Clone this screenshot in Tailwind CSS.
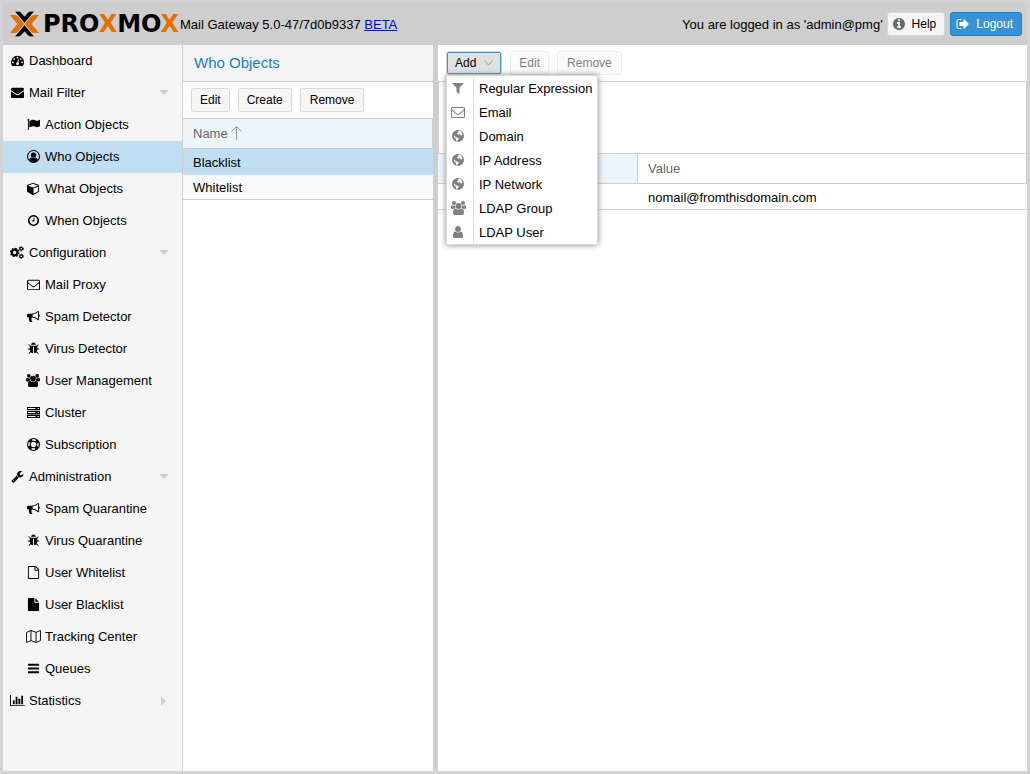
<!DOCTYPE html>
<html lang="en">
<head>
<meta charset="utf-8">
<meta name="viewport" content="width=device-width, initial-scale=1">
<title>Proxmox Mail Gateway</title>
<script src="https://cdn.jsdelivr.net/npm/@tailwindcss/browser@4"></script>
</head>
<body class="flex h-screen flex-col border-3 border-[#d4d4d4] bg-white font-['Liberation_Sans',sans-serif] text-[13px] leading-4 text-black">

<svg class="hidden" aria-hidden="true">
  <symbol id="tachometer" viewBox="0 0 1792 1792"><path d="M384 1152q0-53-37.500-90.500t-90.500-37.500-90.500 37.500-37.500 90.500 37.500 90.500 90.500 37.500 90.500-37.500 37.500-90.500zm192-448q0-53-37.500-90.500t-90.500-37.500-90.500 37.500-37.500 90.500 37.500 90.500 90.500 37.500 90.500-37.500 37.500-90.500zm428 481l101-382q6-26-7.500-48.500t-38.500-29.500-48 6.500-30 39.500l-101 382q-60 5-107 43.500t-63 98.500q-20 77 20 146t117 89 146-20 89-117q16-60-6-117t-72-91zm660-33q0-53-37.500-90.500t-90.500-37.500-90.500 37.500-37.500 90.500 37.500 90.500 90.500 37.500 90.500-37.500 37.500-90.500zm-640-640q0-53-37.500-90.500t-90.500-37.500-90.500 37.500-37.500 90.500 37.500 90.500 90.500 37.500 90.500-37.500 37.500-90.500zm448 192q0-53-37.500-90.500t-90.500-37.500-90.500 37.500-37.500 90.500 37.500 90.500 90.500 37.500 90.500-37.500 37.500-90.500zm320 448q0 261-141 483-19 29-54 29h-1402q-35 0-54-29-141-221-141-483 0-182 71-348t191-286 286-191 348-71 348 71 286 191 191 286 71 348z"/></symbol>
  <symbol id="envelope" viewBox="0 0 1792 1792"><path d="M1792 710v794q0 66-47 113t-113 47h-1472q-66 0-113-47t-47-113v-794q44 49 101 87 362 246 497 345 57 42 92.500 65.500t94.500 48 110 24.500h2q51 0 110-24.500t94.500-48 92.500-65.500q170-123 498-345 57-39 100-87zm0-294q0 79-49 151t-122 123q-376 261-468 325-10 7-42.500 30.500t-54 38-52 32.500-57.500 27-50 9h-2q-23 0-50-9t-57.500-27-52-32.500-54-38-42.500-30.500q-91-64-262-182.500t-205-142.500q-62-42-117-115.500t-55-136.500q0-78 41.500-130t118.500-52h1472q65 0 112.500 47t47.500 113z"/></symbol>
  <symbol id="envelope-o" viewBox="0 0 1792 1792"><path d="M1664 1504v-768q-32 36-69 66-268 206-426 338-51 43-83 67t-86.500 48.500-102.500 24.500h-2q-48 0-102.500-24.500t-86.500-48.500-83-67q-158-132-426-338-37-30-69-66v768q0 13 9.500 22.500t22.500 9.500h1472q13 0 22.500-9.500t9.500-22.500zm0-1051v-24.500l-.5-13-3-12.500-5.500-9-9-7.500-14-2.500h-1472q-13 0-22.500 9.500t-9.500 22.500q0 168 147 284 193 152 401 317 6 5 35 29.500t46 37.500 44.500 31.500 50.500 27.500 43 9h2q20 0 43-9t50.500-27.500 44.500-31.500 46-37.500 35-29.500q208-165 401-317 54-43 100.500-115.500t46.500-131.500zm128-37v1088q0 66-47 113t-113 47h-1472q-66 0-113-47t-47-113v-1088q0-66 47-113t113-47h1472q66 0 113 47t47 113z"/></symbol>
  <symbol id="flag" viewBox="0 0 1792 1792"><path d="M320 256q0 72-64 110v1266q0 13-9.500 22.500t-22.500 9.500h-64q-13 0-22.500-9.500t-9.500-22.500v-1266q-64-38-64-110 0-53 37.500-90.500t90.500-37.500 90.500 37.500 37.500 90.500zm1472 64v763q0 25-12.500 38.500t-39.500 27.500q-215 116-369 116-61 0-123.500-22t-108.500-48-115.500-48-142.500-22q-192 0-464 146-17 9-33 9-26 0-45-19t-19-45v-742q0-32 31-55 21-14 79-43 236-120 421-120 107 0 200 29t219 88q38 19 88 19 54 0 117.500-21t110-47 88-47 54.500-21q26 0 45 19t19 45z"/></symbol>
  <symbol id="user-circle-o" viewBox="0 0 1792 1792"><path fill-rule="evenodd" d="M896 0a896 896 0 1 1 0 1792a896 896 0 1 1 0-1792zM896 150a746 746 0 0 0-580 1210c45-220 160-320 314-320q110 102 266 102t266-102c170 0 269 100 314 320a746 746 0 0 0-580-1210z"/><circle cx="896" cy="700" r="370"/></symbol>
  <symbol id="cube" viewBox="0 0 1792 1792"><path d="M896 1629l640-349v-636l-640 233v752zm-64-865l698-254-698-254-698 254zm832-252v768q0 35-18 65t-49 47l-704 384q-28 16-61 16t-61-16l-704-384q-31-17-49-47t-18-65v-768q0-40 23-73t61-47l704-256q22-8 44-8t44 8l704 256q38 14 61 47t23 73z"/></symbol>
  <symbol id="clock-o" viewBox="0 0 1792 1792"><path d="M1024 544v448q0 14-9 23t-23 9h-320q-14 0-23-9t-9-23v-64q0-14 9-23t23-9h224v-352q0-14 9-23t23-9h64q14 0 23 9t9 23zm416 352q0-148-73-273t-198-198-273-73-273 73-198 198-73 273 73 273 198 198 273 73 273-73 198-198 73-273zm224 0q0 209-103 385.500t-279.500 279.500-385.500 103-385.500-103-279.500-279.500-103-385.500 103-385.500 279.500-279.500 385.500-103 385.500 103 279.500 279.500 103 385.500z"/></symbol>
  <symbol id="cogs" viewBox="0 0 1920 1792"><g fill="none" stroke="currentColor"><circle cx="640" cy="896" r="385" stroke-width="300"/><circle cx="640" cy="896" r="570" stroke-width="170" stroke-dasharray="223.800"/><circle cx="1536" cy="384" r="200" stroke-width="170"/><circle cx="1536" cy="384" r="310" stroke-width="120" stroke-dasharray="162.300"/><circle cx="1536" cy="1408" r="200" stroke-width="170"/><circle cx="1536" cy="1408" r="310" stroke-width="120" stroke-dasharray="162.300"/></g></symbol>
  <symbol id="bullhorn" viewBox="0 0 1792 1792"><path d="M1664 640q53 0 90.500 37.500t37.500 90.500-37.500 90.500-90.500 37.500v384q0 52-38 90t-90 38q-417-347-812-380-58 19-91 66t-31 100.500 40 92.500q-20 33-23 65.500t6 58 33.500 55 48 50 61.500 50.500q-29 58-111.500 83t-168.500 11.500-132-55.500q-7-23-29.500-87.500t-32-94.500-23-89-15-101 3.500-98.500 22-110.500h-122q-66 0-113-47t-47-113v-192q0-66 47-113t113-47h480q435 0 896-384 52 0 90 38t38 90v384zm-128 604v-954q-394 302-768 343v270q377 42 768 341z"/></symbol>
  <symbol id="bug" viewBox="0 0 1792 1792"><path d="M1696 960q0 26-19 45t-45 19h-224q0 171-67 290l208 209q19 19 19 45t-19 45q-18 19-45 19t-45-19l-198-197q-5 5-15 13t-42 28.500-65 36.500-82 29-97 13v-896h-128v896q-51 0-101.500-13.500t-87-33-66-39-43.500-32.500l-15-14-183 207q-20 21-48 21-24 0-43-16-19-18-20.500-44.500t15.500-46.500l202-227q-58-114-58-274h-224q-26 0-45-19t-19-45 19-45 45-19h224v-294l-173-173q-19-19-19-45t19-45 45-19 45 19l173 173h844l173-173q19-19 45-19t45 19 19 45-19 45l-173 173v294h224q26 0 45 19t19 45zm-480-576h-640q0-133 93.500-226.500t226.500-93.500 226.500 93.500 93.500 226.500z"/></symbol>
  <symbol id="users" viewBox="0 0 1920 1792"><circle cx="384" cy="256" r="256"/><circle cx="1536" cy="256" r="256"/><circle cx="960" cy="640" r="384"/><path d="M593 896q-162 5-265 128H194q-82 0-138-40.500T0 865q0-353 124-353 6 0 43.500 21t97.500 42.500T384 597q67 0 133-23-5 37-5 66 0 139 81 256zM1327 896q162 5 265 128h134q82 0 138-40.500t56-118.500q0-353-124-353-6 0-43.500 21t-97.500 42.500-119 21.500q-67 0-133-23 5 37 5 66 0 139-81 256zM1664 1533q0 120-73 189.500t-194 69.500H523q-121 0-194-69.500T256 1533q0-53 3.500-103.500t14-109T300 1212t43-97.500 62-81 85.500-53.500T602 960q10 0 43 21.500t73 48 107 48T960 1099t135-21.500 107-48 73-48 43-21.500q61 0 111.500 20t85.500 53.500 62 81 43 97.500 26.500 108.500 14 109 3.500 103.500z"/></symbol>
  <symbol id="server" viewBox="0 0 1792 1792"><path fill-rule="evenodd" d="M0 128h1792v448H0zM128 290v124h1024V290zM0 672h1792v448H0zM128 834v124h1024V834zM0 1216h1792v448H0zM128 1378v124h1024v-124zM1470 290h170v124h-170zM1470 834h170v124h-170zM1470 1378h170v124h-170z"/></symbol>
  <symbol id="life-ring" viewBox="0 0 1792 1792"><g fill="none" stroke="currentColor"><circle cx="896" cy="896" r="822" stroke-width="148"/><circle cx="896" cy="896" r="448" stroke-width="148"/><circle cx="896" cy="896" r="640" stroke-width="400" stroke-dasharray="480 525.300" stroke-dashoffset="-262"/></g></symbol>
  <symbol id="wrench" viewBox="0 0 1792 1792"><path d="M448 1472q0-26-19-45t-45-19-45 19-19 45 19 45 45 19 45-19 19-45zm644-420l-682 682q-37 37-90 37-52 0-91-37l-106-108q-38-36-38-90 0-53 38-91l681-681q39 98 114.500 173.500t173.500 114.500zm634-435q0 39-23 106-47 134-164.500 217.500t-258.500 83.500q-185 0-316.500-131.500t-131.500-316.500 131.500-316.500 316.500-131.500q58 0 121.500 16.500t107.500 46.500q16 11 16 28t-16 28l-293 169v224l193 107q5-3 79-48.500t135.500-81 70.500-35.500q15 0 23.500 10t8.500 25z"/></symbol>
  <symbol id="file-o" viewBox="0 0 1792 1792"><path d="M1596 380q28 28 48 76t20 88v1152q0 40-28 68t-68 28h-1344q-40 0-68-28t-28-68v-1600q0-40 28-68t68-28h896q40 0 88 20t76 48zm-444-244v376h376q-10-29-22-41l-313-313q-12-12-41-22zm384 1528v-1024h-416q-40 0-68-28t-28-68v-416h-768v1536h1280z"/></symbol>
  <symbol id="file" viewBox="0 0 1792 1792"><path d="M1152 512v-472q22 14 36 28l408 408q14 14 28 36h-472zm-128 32q0 40 28 68t68 28h544v1056q0 40-28 68t-68 28h-1344q-40 0-68-28t-28-68v-1600q0-40 28-68t68-28h800v544z"/></symbol>
  <symbol id="map-o" viewBox="0 0 2048 1792"><path fill="none" stroke="currentColor" stroke-width="128" stroke-linejoin="round" d="M64 330L672 70l704 256 608-256v1392l-608 256-704-256-608 256zM672 70v1392M1376 326v1392"/></symbol>
  <symbol id="bars" viewBox="0 0 1792 1792"><path d="M192 256h1408q64 0 64 64v128q0 64-64 64H192q-64 0-64-64V320q0-64 64-64zM192 768h1408q64 0 64 64v128q0 64-64 64H192q-64 0-64-64V832q0-64 64-64zM192 1280h1408q64 0 64 64v128q0 64-64 64H192q-64 0-64-64v-128q0-64 64-64z"/></symbol>
  <symbol id="bar-chart" viewBox="0 0 2048 1792"><path d="M640 896v512h-256v-512h256zm384-512v1024h-256v-1024h256zm1024 1152v128h-2048v-1536h128v1408h1920zm-640-896v768h-256v-768h256zm384-384v1152h-256v-1152h256z"/></symbol>
  <symbol id="filter" viewBox="0 0 1792 1792"><path d="M1595 295q17 41-14 70l-493 493v742q0 42-39 59-13 5-25 5-27 0-45-19l-256-256q-19-19-19-45v-486l-493-493q-31-29-14-70 17-39 59-39h1280q42 0 59 39z"/></symbol>
  <symbol id="globe" viewBox="0 0 1792 1792"><path fill-rule="evenodd" d="M896 128a768 768 0 1 1 0 1536a768 768 0 1 1 0-1536zM1010 250l-110 60 60 90-150 110-60 120 110 40 60 100 110-90 60 60 80-30 100 110 130-30 60-150-110-150-60-160-110-80zM400 800l-60 140 120 190 130 30 20 180 90 210 140 40 30-180 130-130-20-110-200-90-130-30-110-60z"/></symbol>
  <symbol id="user" viewBox="0 0 1792 1792"><path d="M1536 1399q0 109-62.500 187t-150.500 78h-854q-88 0-150.500-78t-62.500-187q0-85 8.500-160.500t31.500-152 58.500-131 94-89 134.500-34.500q131 128 313 128t313-128q76 0 134.500 34.500t94 89 58.500 131 31.500 152 8.500 160.500zm-256-887q0 159-112.500 271.500t-271.500 112.500-271.500-112.500-112.500-271.500 112.500-271.500 271.500-112.500 271.500 112.500 112.500 271.500z"/></symbol>
  <symbol id="info-circle" viewBox="0 0 1792 1792"><path d="M1152 1376v-160q0-14-9-23t-23-9h-96v-512q0-14-9-23t-23-9h-320q-14 0-23 9t-9 23v160q0 14 9 23t23 9h96v320h-96q-14 0-23 9t-9 23v160q0 14 9 23t23 9h448q14 0 23-9t9-23zm-128-896v-160q0-14-9-23t-23-9h-192q-14 0-23 9t-9 23v160q0 14 9 23t23 9h192q14 0 23-9t9-23zm640 416q0 209-103 385.500t-279.500 279.500-385.500 103-385.500-103-279.500-279.500-103-385.500 103-385.500 279.500-279.500 385.500-103 385.500 103 279.500 279.500 103 385.500z"/></symbol>
  <symbol id="sign-out" viewBox="0 0 1792 1792"><path d="M704 1440q0 4 1 20t.5 26.500-3 23.500-10 19.500-20.500 6.500h-320q-119 0-203.500-84.500t-84.500-203.500v-704q0-119 84.500-203.500t203.500-84.500h320q13 0 22.500 9.500t9.500 22.500q0 4 1 20t.5 26.500-3 23.500-10 19.500-20.500 6.500h-320q-66 0-113 47t-47 113v704q0 66 47 113t113 47h312l11.500 1 11.500 3 8 5.500 7 9 2 13.500zm928-544q0 26-19 45l-544 544q-19 19-45 19t-45-19-19-45v-288h-448q-26 0-45-19t-19-45v-384q0-26 19-45t45-19h448v-288q0-26 19-45t45-19 45 19l544 544q19 19 19 45z"/></symbol>
</svg>

<header class="flex h-[42px] shrink-0 items-center bg-[#cecece] pr-[5px] pl-[7px]">
  <div class="flex items-center gap-1" aria-label="Proxmox">
    <svg class="h-[26px] w-[29px]" viewBox="0 0 29 26" aria-hidden="true">
      <g fill="#e57000"><path d="M0 4h4.500q2 0 3.300 1.500L14.300 13l-6.500 7.500Q6.500 22 4.500 22H0l7.500-9z"/><path d="M29 4h-4.500q-2 0-3.300 1.500L14.700 13l6.500 7.500q1.300 1.500 3.300 1.500H29l-7.500-9z"/></g>
      <g stroke="#cecece" stroke-width=".7"><path d="M4.500.300h3.800q1.800 0 3 1.400l3.200 3.600 3.200-3.600q1.200-1.400 3-1.400h3.800L14.500 12.300z"/><path d="M4.500 25.700h3.800q1.800 0 3-1.400l3.200-3.600 3.200 3.600q1.200 1.400 3 1.400h3.800L14.500 13.700z"/></g>
    </svg>
    <span class="w-[137px] font-['DejaVu_Sans',sans-serif] text-[24px] leading-6 font-bold">PRO<span class="text-[#e57000]">X</span>MO<span class="text-[#e57000]">X</span></span>
  </div>
  <p class="grow pt-0.5 whitespace-nowrap">Mail Gateway 5.0-47/7d0b9337 <a href="#beta" class="text-[#0000ee] underline">BETA</a></p>
  <p class="mr-1 pt-0.5 whitespace-nowrap">You are logged in as 'admin@pmg'</p>
  <button class="mr-[5px] flex h-6 items-center gap-1.5 rounded-[3px] border border-[#d8d8d8] bg-[#f5f5f5] pr-2 pl-1 text-[12px]"><svg class="size-[14px] fill-[#666]"><use href="#info-circle"/></svg>Help</button>
  <button class="flex h-6 items-center gap-1.5 rounded-[3px] border border-[#157fcc] bg-[#3892d4] pr-2 pl-[5px] text-[12px] text-white"><svg class="size-[14px] fill-white"><use href="#sign-out"/></svg>Logout</button>
</header>

<div class="flex min-h-0 grow">
  <nav class="w-[180px] shrink-0 border-r border-[#cecece] bg-[#f5f5f5] [&_svg]:mb-px">
    <ul>
      <li><a href="#dashboard" class="flex h-8 items-center gap-[5px] pl-2"><svg class="size-[13px] fill-current"><use href="#tachometer"/></svg>Dashboard</a></li>
      <li><a href="#mail-filter" class="flex h-8 items-center gap-[5px] pr-[13px] pl-2"><svg class="size-[13px] fill-current"><use href="#envelope"/></svg>Mail Filter<svg class="ml-auto h-[5px] w-[10px] fill-[#cecece]" viewBox="0 0 10 5"><path d="M0 0h10L5 5z"/></svg></a>
        <ul>
          <li><a href="#action" class="flex h-8 items-center gap-[5px] pl-6"><svg class="size-[13px] fill-current"><use href="#flag"/></svg>Action Objects</a></li>
          <li><a href="#who" aria-current="page" class="flex h-8 items-center gap-[5px] bg-[#c1ddf1] pl-6"><svg class="size-[13px] fill-current"><use href="#user-circle-o"/></svg>Who Objects</a></li>
          <li><a href="#what" class="flex h-8 items-center gap-[5px] pl-6"><svg class="size-[13px] fill-current"><use href="#cube"/></svg>What Objects</a></li>
          <li><a href="#when" class="flex h-8 items-center gap-[5px] pl-6"><svg class="size-[13px] fill-current"><use href="#clock-o"/></svg>When Objects</a></li>
        </ul>
      </li>
      <li><a href="#configuration" class="flex h-8 items-center gap-[5px] pr-[13px] pl-[7px]"><svg class="h-[13px] w-[14px] fill-current"><use href="#cogs"/></svg>Configuration<svg class="ml-auto h-[5px] w-[10px] fill-[#cecece]" viewBox="0 0 10 5"><path d="M0 0h10L5 5z"/></svg></a>
        <ul>
          <li><a href="#proxy" class="flex h-8 items-center gap-[5px] pl-6"><svg class="size-[13px] fill-current"><use href="#envelope-o"/></svg>Mail Proxy</a></li>
          <li><a href="#spam" class="flex h-8 items-center gap-[5px] pl-6"><svg class="size-[13px] fill-current"><use href="#bullhorn"/></svg>Spam Detector</a></li>
          <li><a href="#virus" class="flex h-8 items-center gap-[5px] pl-6"><svg class="size-[13px] fill-current"><use href="#bug"/></svg>Virus Detector</a></li>
          <li><a href="#users-page" class="flex h-8 items-center gap-[5px] pl-[23px]"><svg class="h-[13px] w-[14px] fill-current"><use href="#users"/></svg>User Management</a></li>
          <li><a href="#cluster" class="flex h-8 items-center gap-[5px] pl-6"><svg class="size-[13px] fill-current"><use href="#server"/></svg>Cluster</a></li>
          <li><a href="#subscription" class="flex h-8 items-center gap-[5px] pl-6"><svg class="size-[13px] fill-current"><use href="#life-ring"/></svg>Subscription</a></li>
        </ul>
      </li>
      <li><a href="#administration" class="flex h-8 items-center gap-[5px] pr-[13px] pl-2"><svg class="size-[13px] fill-current"><use href="#wrench"/></svg>Administration<svg class="ml-auto h-[5px] w-[10px] fill-[#cecece]" viewBox="0 0 10 5"><path d="M0 0h10L5 5z"/></svg></a>
        <ul>
          <li><a href="#spam-quarantine" class="flex h-8 items-center gap-[5px] pl-6"><svg class="size-[13px] fill-current"><use href="#bullhorn"/></svg>Spam Quarantine</a></li>
          <li><a href="#virus-quarantine" class="flex h-8 items-center gap-[5px] pl-6"><svg class="size-[13px] fill-current"><use href="#bug"/></svg>Virus Quarantine</a></li>
          <li><a href="#user-whitelist" class="flex h-8 items-center gap-[5px] pl-6"><svg class="size-[13px] fill-current"><use href="#file-o"/></svg>User Whitelist</a></li>
          <li><a href="#user-blacklist" class="flex h-8 items-center gap-[5px] pl-6"><svg class="size-[13px] fill-current"><use href="#file"/></svg>User Blacklist</a></li>
          <li><a href="#tracking" class="flex h-8 items-center gap-1 pl-[23px]"><svg class="h-[13px] w-[15px] fill-current"><use href="#map-o"/></svg>Tracking Center</a></li>
          <li><a href="#queues" class="flex h-8 items-center gap-[5px] pl-6"><svg class="size-[13px] fill-current"><use href="#bars"/></svg>Queues</a></li>
        </ul>
      </li>
      <li><a href="#statistics" class="flex h-8 items-center gap-1 pr-4 pl-[7px]"><svg class="h-[13px] w-[15px] fill-current"><use href="#bar-chart"/></svg>Statistics<svg class="ml-auto h-[10px] w-[5px] fill-[#cecece]" viewBox="0 0 5 10"><path d="M0 0v10l5-5z"/></svg></a></li>
    </ul>
  </nav>

  <section class="w-[250px] shrink-0">
    <h1 class="flex h-[37px] items-center border-b border-[#cecece] bg-[#f5f5f5] pl-[11px] text-[15px] text-[#157fcc]">Who Objects</h1>
    <div class="flex h-[37px] items-center gap-2 border-b border-[#cecece] pl-2 text-[12px]">
      <button class="h-6 rounded-[3px] border border-[#d8d8d8] bg-[#f5f5f5] px-2">Edit</button>
      <button class="h-6 rounded-[3px] border border-[#d8d8d8] bg-[#f5f5f5] px-2">Create</button>
      <button class="h-6 rounded-[3px] border border-[#d8d8d8] bg-[#f5f5f5] px-[9px]">Remove</button>
    </div>
    <table class="w-full border-separate border-spacing-0 text-left">
      <thead><tr><th class="h-[30px] border-r border-b border-[#cecece] bg-[#edf5fc] px-[10px] font-normal text-[#666]"><span class="flex items-center gap-[3px]">Name<svg class="mb-0.5 h-[14px] w-[11px] fill-none stroke-[#999]" viewBox="0 0 11 14"><path d="M5.500 .5V14M.5 5.500l5-5 5 5"/></svg></span></th></tr></thead>
      <tbody>
        <tr><td class="h-[26px] bg-[#c1ddf1] px-[10px] pt-0.5">Blacklist</td></tr>
        <tr><td class="h-[25px] border-b border-[#cecece] bg-[#fafafa] px-[10px] pt-0.5">Whitelist</td></tr>
      </tbody>
    </table>
  </section>

  <div class="w-[5px] shrink-0 bg-[#cecece]"></div>

  <section class="min-w-0 grow">
    <div class="flex h-[37px] items-center gap-2 border-b border-[#cecece] pl-2 text-[12px]">
      <div class="relative">
        <button aria-haspopup="menu" aria-expanded="true" class="flex h-6 items-center gap-2 rounded-[3px] border border-[#d8d8d8] bg-[#e1e1e1] px-2 outline-1 -outline-offset-2 outline-[#3892d4]">Add<svg class="h-[6px] w-[9px] fill-none stroke-[#999]" viewBox="0 0 9 6"><path d="M.5 .5l4 4.500 4-4.500"/></svg></button>
        <ul role="menu" class="absolute top-6 left-0 z-10 w-[152px] border border-[#d8d8d8] bg-white text-[13px] shadow-[0_0_6px_#888]">
          <li role="menuitem" class="flex h-6 items-center"><span class="flex h-6 w-[27px] shrink-0 items-center border-r border-[#e1e1e1] pl-1"><svg class="size-[14px] fill-[#808080]"><use href="#filter"/></svg></span><span class="pt-0.5 pl-[5px] whitespace-nowrap">Regular Expression</span></li>
          <li role="menuitem" class="flex h-6 items-center"><span class="flex h-6 w-[27px] shrink-0 items-center border-r border-[#e1e1e1] pl-1"><svg class="size-[14px] fill-[#808080]"><use href="#envelope-o"/></svg></span><span class="pt-0.5 pl-[5px]">Email</span></li>
          <li role="menuitem" class="flex h-6 items-center"><span class="flex h-6 w-[27px] shrink-0 items-center border-r border-[#e1e1e1] pl-1"><svg class="size-[14px] fill-[#808080]"><use href="#globe"/></svg></span><span class="pt-0.5 pl-[5px]">Domain</span></li>
          <li role="menuitem" class="flex h-6 items-center"><span class="flex h-6 w-[27px] shrink-0 items-center border-r border-[#e1e1e1] pl-1"><svg class="size-[14px] fill-[#808080]"><use href="#globe"/></svg></span><span class="pt-0.5 pl-[5px]">IP Address</span></li>
          <li role="menuitem" class="flex h-6 items-center"><span class="flex h-6 w-[27px] shrink-0 items-center border-r border-[#e1e1e1] pl-1"><svg class="size-[14px] fill-[#808080]"><use href="#globe"/></svg></span><span class="pt-0.5 pl-[5px]">IP Network</span></li>
          <li role="menuitem" class="flex h-6 items-center"><span class="flex h-6 w-[27px] shrink-0 items-center border-r border-[#e1e1e1] pl-1"><svg class="h-[14px] w-[15px] fill-[#808080]"><use href="#users"/></svg></span><span class="pt-0.5 pl-[5px]">LDAP Group</span></li>
          <li role="menuitem" class="flex h-6 items-center"><span class="flex h-6 w-[27px] shrink-0 items-center border-r border-[#e1e1e1] pl-1"><svg class="size-[14px] fill-[#808080]"><use href="#user"/></svg></span><span class="pt-0.5 pl-[5px]">LDAP User</span></li>
        </ul>
      </div>
      <button disabled class="h-6 rounded-[3px] border border-[#ebebeb] bg-[#fafafa] px-2 text-[#808080]">Edit</button>
      <button disabled class="h-6 rounded-[3px] border border-[#ebebeb] bg-[#fafafa] px-[9px] text-[#808080]">Remove</button>
    </div>
    <div class="h-[71px] border-x border-[#cecece]"></div>
    <table class="w-full table-fixed border-separate border-spacing-0 text-left">
      <colgroup><col class="w-[200px]"><col></colgroup>
      <thead><tr><th class="h-[31px] border-y border-r border-[#cecece] bg-[#edf5fc]"></th><th class="h-[31px] border-y border-r border-[#cecece] px-[10px] font-normal text-[#666]">Value</th></tr></thead>
      <tbody><tr><td class="h-[26px] border-b border-[#cecece]"></td><td class="h-[26px] border-b border-[#cecece] px-[10px] pt-0.5">nomail@fromthisdomain.com</td></tr></tbody>
    </table>
  </section>
</div>
</body>
</html>
